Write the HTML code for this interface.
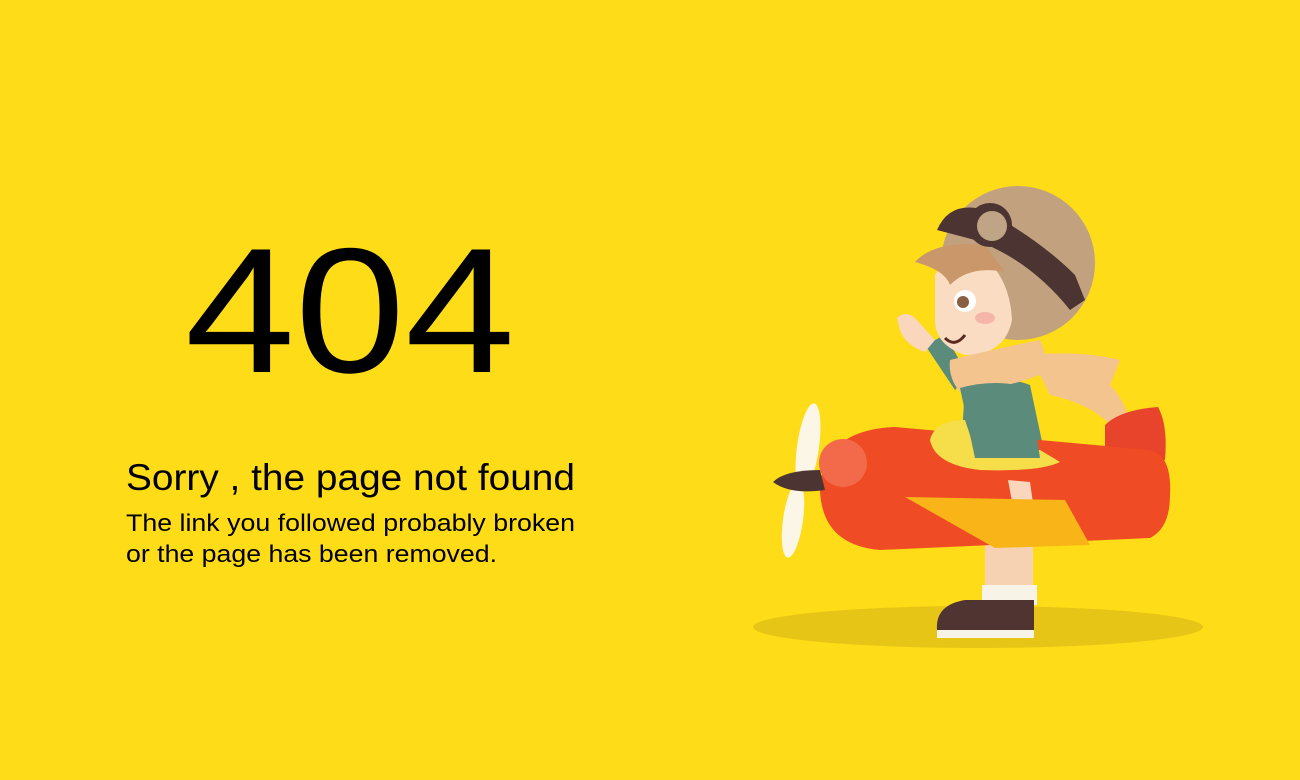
<!DOCTYPE html>
<html><head><meta charset="utf-8"><style>
html,body{margin:0;padding:0;background:#FEDC17;}
svg{display:block}
</style></head><body>
<svg width="1300" height="780" viewBox="0 0 1300 780" xmlns="http://www.w3.org/2000/svg">
<rect width="1300" height="780" fill="#FEDC17"/>
<g font-family="Liberation Sans, Arial, sans-serif" fill="#000">
<text x="185" y="372" font-size="178" textLength="330" lengthAdjust="spacingAndGlyphs">404</text>
<text x="126" y="490" font-size="37" textLength="449" lengthAdjust="spacingAndGlyphs">Sorry , the page not found</text>
<text x="126" y="531" font-size="24" textLength="449" lengthAdjust="spacingAndGlyphs">The link you followed probably broken</text>
<text x="126" y="562" font-size="24" textLength="371" lengthAdjust="spacingAndGlyphs">or the page has been removed.</text>
</g>
<ellipse cx="978" cy="627" rx="225" ry="21" fill="#E7C516"/>
<rect x="985" y="545" width="48" height="50" fill="#F6D2B2"/>
<rect x="982" y="585" width="55" height="20" fill="#F7F3E6"/>
<path d="M937 630 Q935 605 965 600 L1034 600 L1034 638 L937 638 Z" fill="#4F3432"/>
<rect x="937" y="630" width="97" height="8" fill="#F7F3E6"/>
<!-- scarf tail -->
<path d="M1030 355 Q1080 350 1120 360 L1110 385 Q1125 400 1130 425 L1115 430 Q1095 405 1050 395 Z" fill="#F4C48E"/>
<!-- arm waving -->
<path d="M925 345 L945 335 L968 375 L955 390 Z" fill="#5B8B7A"/>
<path d="M897 318 Q905 310 915 318 L935 340 L925 352 Q905 345 900 330 Z" fill="#F9D6BC"/>
<!-- helmet -->
<circle cx="1018" cy="263" r="77" fill="#C2A27E"/>
<path d="M935 275 Q945 255 985 258 Q1010 280 1012 320 Q1005 355 965 355 Q935 345 935 320 Z" fill="#FADCC2"/>
<path d="M915 262 Q935 240 985 245 L1005 272 Q970 265 950 285 Q945 270 915 262 Z" fill="#C9976A"/>
<circle cx="965" cy="301" r="11" fill="#fff"/>
<circle cx="963" cy="302" r="6" fill="#8A5E40"/>
<ellipse cx="985" cy="318" rx="10" ry="6" fill="#F5B5A8"/>
<path d="M945 338 Q955 348 965 335" stroke="#5A2A20" stroke-width="3" fill="none"/>
<path d="M937 230 Q950 200 985 210 Q1040 240 1075 275 L1085 300 L1070 310 Q1030 260 975 240 Z" fill="#4B3432"/>
<circle cx="990" cy="225" r="22" fill="#4B3432"/>
<circle cx="992" cy="226" r="15" fill="#BFA586"/>
<!-- body shirt -->
<path d="M965 385 Q995 372 1030 385 L1048 470 L960 470 Z" fill="#5B8B7A"/>
<!-- scarf -->
<path d="M950 360 Q990 350 1040 340 Q1050 360 1040 375 Q1000 390 960 392 Q948 378 950 360 Z" fill="#F4C48E"/>
<!-- plane -->
<path d="M1105 425 Q1120 410 1158 407 Q1168 425 1165 460 L1105 462 Z" fill="#E8432B"/>
<path d="M895 427 L1150 450 Q1172 455 1170 495 Q1170 528 1150 538 L880 550 Q822 545 820 490 Q822 430 895 427 Z" fill="#EF4B24"/>
<path d="M930 440 Q935 420 965 420 L975 450 L1040 450 L1060 462 Q1040 472 980 470 Q935 465 930 440 Z" fill="#F6DD4A"/>
<path d="M960 388 Q995 378 1030 388 L1040 458 L975 458 Z" fill="#5B8B7A"/>
<path d="M1008 480 L1030 482 L1033 503 L1013 507 Z" fill="#F9D6BC"/>
<path d="M905 497 L1065 500 L1090 545 L995 548 Z" fill="#F9B518"/>
<circle cx="843" cy="463" r="24" fill="#F26A4A"/>
<ellipse cx="808" cy="447" rx="11" ry="44" fill="#FBF6E6" transform="rotate(8 808 447)"/>
<ellipse cx="793" cy="520" rx="10" ry="38" fill="#FBF6E6" transform="rotate(8 793 520)"/>
<path d="M773 482 Q785 470 820 470 L825 490 Q790 495 773 482 Z" fill="#4B3432"/>
</svg>
</body></html>
